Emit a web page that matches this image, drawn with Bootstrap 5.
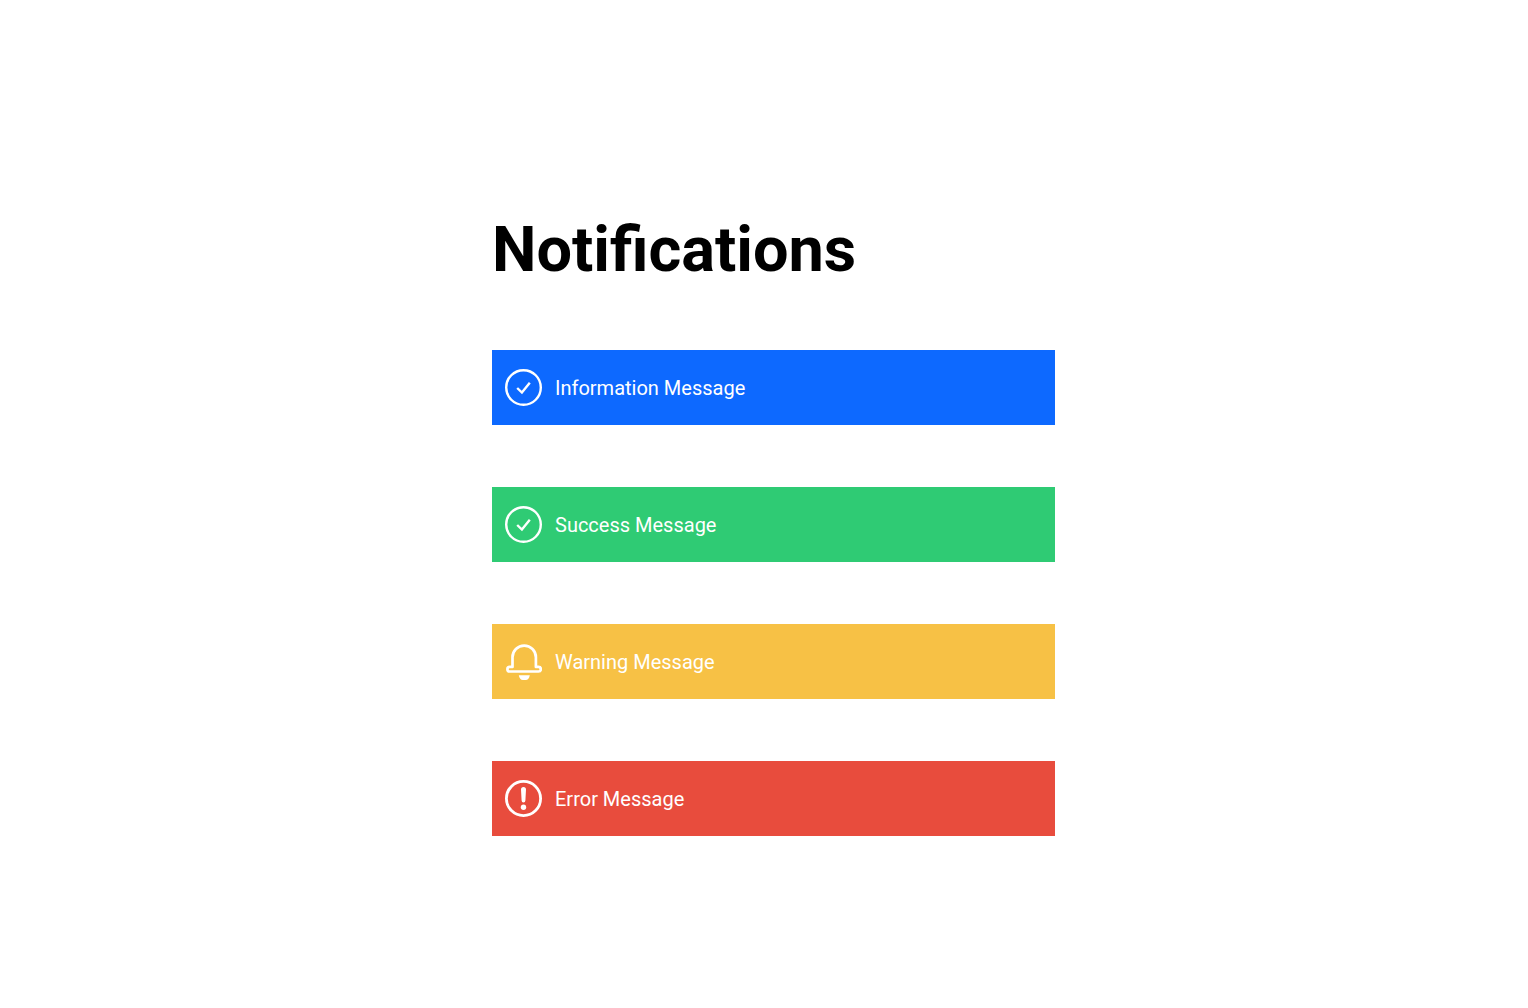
<!DOCTYPE html>
<html lang="en">
<head>
<meta charset="utf-8">
<meta name="viewport" content="width=device-width, initial-scale=1">
<title>Notifications</title>
<link href="https://cdn.jsdelivr.net/npm/bootstrap@5.3.0/dist/css/bootstrap.min.css" rel="stylesheet">
<style>
  body { font-family: Roboto, "Liberation Sans", sans-serif; color: #000; }
  .notice-page { max-width: 582px; padding: 212px 0 48px 19px; }
  .notice-title { font-size: 63px; line-height: 76px; font-weight: 700; margin-bottom: 62px; color: #000; }
  .notice-list { gap: 62px; }
  .notice { gap: 13px; padding: 19px 13px; font-size: 20px; line-height: 24px; color: #fff; }
  .notice svg { width: 37px; height: 37px; flex: none; }
  .notice-info { background: #0d69ff; }
  .notice-success { background: #2fcb74; }
  .notice-warning { background: #f7c145; }
  .notice-error { background: #e84c3d; }
</style>
</head>
<body class="bg-white">
<main class="notice-page mx-auto">
  <h1 class="notice-title">Notifications</h1>
  <div class="notice-list d-flex flex-column">
    <div class="notice notice-info alert border-0 rounded-0 m-0 d-flex align-items-center" role="alert">
      <svg viewBox="0 0 37 37" fill="none" stroke="#fff" stroke-width="2.4" aria-hidden="true"><circle cx="18.5" cy="18.5" r="17.3"/><path d="M12.2 19l4.700 4.500 7.900-9.700"/></svg>
      <span>Information Message</span>
    </div>
    <div class="notice notice-success alert border-0 rounded-0 m-0 d-flex align-items-center" role="alert">
      <svg viewBox="0 0 37 37" fill="none" stroke="#fff" stroke-width="2.4" aria-hidden="true"><circle cx="18.5" cy="18.5" r="17.3"/><path d="M12.2 19l4.700 4.500 7.900-9.700"/></svg>
      <span>Success Message</span>
    </div>
    <div class="notice notice-warning alert border-0 rounded-0 m-0 d-flex align-items-center" role="alert">
      <svg viewBox="0 0 37 37" fill="none" stroke="#fff" stroke-width="2.7" stroke-linejoin="round" aria-hidden="true"><path d="M7.500 23.900V14.300a11.700 11.700 0 0 1 23.400 0v9.600h2.600a2.300 2.300 0 0 1 0 4.600H4.700a2.300 2.300 0 0 1 0-4.600z"/><path d="M13.800 32.300h11c-.5 3-2 4.700-4 4.700h-3c-2 0-3.500-1.700-4-4.700z" fill="#fff" stroke="none"/></svg>
      <span>Warning Message</span>
    </div>
    <div class="notice notice-error alert border-0 rounded-0 m-0 d-flex align-items-center" role="alert">
      <svg viewBox="0 0 37 37" fill="none" stroke="#fff" stroke-width="2.8" aria-hidden="true"><circle cx="18.5" cy="18.5" r="17.1"/><path d="M16 9.500a2.500 2.500 0 0 1 5 0l-.6 11a1.900 1.900 0 0 1-3.800 0z" fill="#fff" stroke="none"/><circle cx="18.5" cy="27.300" r="2.700" fill="#fff" stroke="none"/></svg>
      <span>Error Message</span>
    </div>
  </div>
</main>
<script src="https://cdn.jsdelivr.net/npm/bootstrap@5.3.0/dist/js/bootstrap.bundle.min.js"></script>
</body>
</html>
